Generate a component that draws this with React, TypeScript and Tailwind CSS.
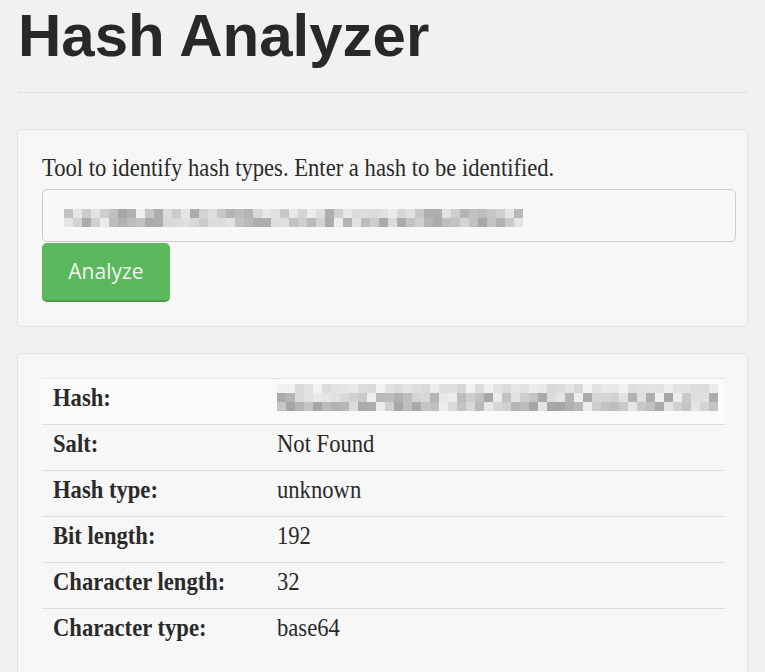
import React from "react";

function Mosaic({ width, rows, cell, seed, light }: { width: number; rows: number; cell: number; seed: number; light?: boolean }) {
  let s = seed;
  const rnd = () => {
    s = (s * 9301 + 49297) % 233280;
    return s / 233280;
  };
  const cols = Math.floor(width / cell);
  const rects: React.ReactElement[] = [];
  for (let r = 0; r < rows; r++) {
    for (let c = 0; c < cols; c++) {
      const v = rnd();
      let g: number;
      if (r === 0 && light) g = 215 + Math.floor(v * 30);
      else g = 165 + Math.floor(v * 75);
      rects.push(<rect key={`${r}-${c}`} x={c * cell} y={r * cell} width={cell} height={cell} fill={`rgb(${g},${g},${g})`} />);
    }
  }
  return (
    <svg width={cols * cell} height={rows * cell} className="block">
      {rects}
    </svg>
  );
}

function T({ children }: { children: React.ReactNode }) {
  return <span className="inline-block origin-left scale-x-[0.87] whitespace-nowrap">{children}</span>;
}

export default function App() {
  const serif = { fontFamily: '"Liberation Serif", "Times New Roman", serif' };
  const rows: [string, React.ReactNode][] = [
    ["Hash:", <Mosaic width={441} rows={3} cell={9} seed={17} light />],
    ["Salt:", <T>Not Found</T>],
    ["Hash type:", <T>unknown</T>],
    ["Bit length:", <T>192</T>],
    ["Character length:", <T>32</T>],
    ["Character type:", <T>base64</T>],
  ];
  return (
    <div className="min-h-[672px] w-[765px] bg-[#f1f1f1] px-[17px] overflow-hidden">
      <h1
        className="pt-[1px] pl-[1px] text-[60px] leading-[69px] font-bold text-[#282828]"
        style={{ fontFamily: '"Liberation Sans", Arial, sans-serif' }}
      >
        Hash Analyzer
      </h1>
      <div className="mt-[22px] border-t border-dotted border-[#cfcfcf] mx-[1px]" />
      <div className="mt-[36px] rounded-[3px] border border-[#e1e1e1] bg-[#f7f7f7] pl-[24px] pr-[11px] pt-[22px] pb-[24px]" style={serif}>
        <p className="text-[26px] leading-[32px] text-[#2a2a2a]"><T>Tool to identify hash types. Enter a hash to be identified.</T></p>
        <div className="mt-[5px] h-[53px] rounded-[5px] border border-[#cccccc] bg-[#f8f8f8] flex items-center pl-[21px] pt-[4px]">
          <Mosaic width={460} rows={2} cell={9} seed={5} />
        </div>
        <button
          className="mt-[1px] h-[59px] w-[128px] rounded-[5px] bg-[#5cb85c] text-[#f2f2f2] text-[21px] border-b-2 border-[#4a9a4a]"
          style={{ fontFamily: '"Open Sans", "Noto Sans", sans-serif' }}
        >
          Analyze
        </button>
      </div>
      <div className="mt-[26px] rounded-[3px] border border-[#e1e1e1] bg-[#f7f7f7] pl-[24px] pr-[22px] pt-[24px] pb-[24px]" style={serif}>
        <table className="w-full border-collapse text-[26px] text-[#2a2a2a]">
          <tbody>
            {rows.map(([k, v], i) => (
              <tr key={k} className={i === 0 ? "bg-[#fafafa] border-t border-dotted border-[#d5d5d5]" : "border-t border-[#dddddd]"}>
                <td className="w-[235px] h-[46px] pl-[11px] pb-[8px] font-bold align-middle leading-[30px]"><T>{k}</T></td>
                <td className="h-[46px] pb-[8px] align-middle leading-[30px]">{v}</td>
              </tr>
            ))}
          </tbody>
        </table>
      </div>
    </div>
  );
}
